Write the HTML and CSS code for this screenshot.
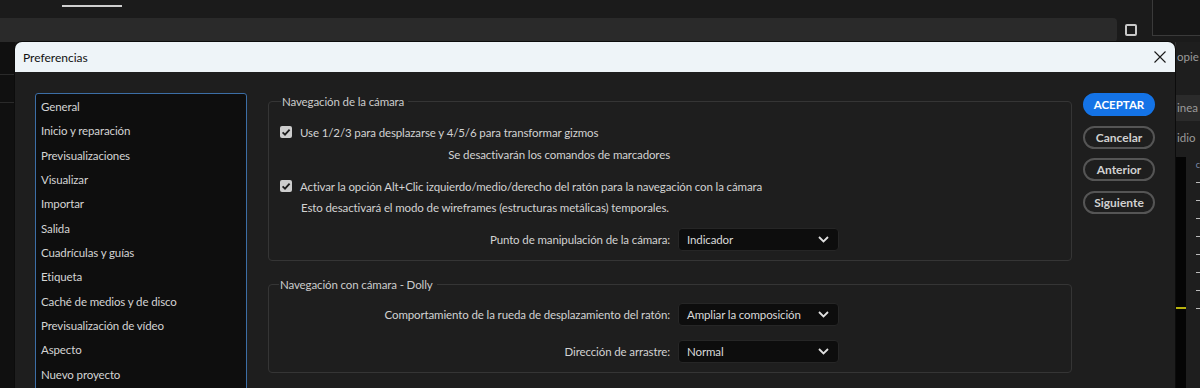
FILE: index.html
```html
<!DOCTYPE html>
<html lang="es">
<head>
<meta charset="utf-8">
<title>Preferencias</title>
<link rel="stylesheet" href="styles.css">
</head>
<body>
<div class="app">
  <div class="top"><div class="tab"></div></div>
  <div class="corner"></div>
  <div class="bar">
    <div class="field"></div>
    <div class="sq"></div>
  </div>
  <div class="work">
    <div class="lstrip"><div class="lrow"></div><div class="lrow"></div></div>
    <div class="center"></div>
    <div class="rstrip">
      <div class="rtxt r1">opie</div>
      <div class="rtxt r2">inea</div>
      <div class="rtxt r3">idio</div>
      <div class="meterrow">
        <div class="meter"><div class="peak"></div></div>
        <div class="ticks">
          <span class="cg">c</span>
          <i></i><i></i><i></i><i></i><i></i><i></i><i></i><i></i>
        </div>
      </div>
    </div>
  </div>

  <div class="dialog">
    <div class="titlebar">
      <span class="title">Preferencias</span>
      <svg class="close" width="12" height="12" viewBox="0 0 12 12"><path d="M0.5 0.5 L11.5 11.5 M11.5 0.5 L0.5 11.5" stroke="#1a1a1a" stroke-width="1.1" fill="none"/></svg>
    </div>
    <div class="body">
      <ul class="navlist">
        <li>General</li>
        <li>Inicio y reparación</li>
        <li>Previsualizaciones</li>
        <li>Visualizar</li>
        <li>Importar</li>
        <li>Salida</li>
        <li>Cuadrículas y guías</li>
        <li>Etiqueta</li>
        <li>Caché de medios y de disco</li>
        <li>Previsualización de vídeo</li>
        <li>Aspecto</li>
        <li>Nuevo proyecto</li>
      </ul>

      <div class="main">
        <fieldset class="group g1">
          <legend>Navegación de la cámara</legend>
          <div class="check r-a">
            <span class="box"><svg width="12" height="12" viewBox="0 0 12 12"><path d="M2.6 6.3 L5 8.6 L9.6 3.6" stroke="#1c1c1c" stroke-width="1.8" fill="none"/></svg></span>
            <span>Use 1/2/3 para desplazarse y 4/5/6 para transformar gizmos</span>
          </div>
          <div class="note n1">Se desactivarán los comandos de marcadores</div>
          <div class="check r-b">
            <span class="box"><svg width="12" height="12" viewBox="0 0 12 12"><path d="M2.6 6.3 L5 8.6 L9.6 3.6" stroke="#1c1c1c" stroke-width="1.8" fill="none"/></svg></span>
            <span>Activar la opción Alt+Clic izquierdo/medio/derecho del ratón para la navegación con la cámara</span>
          </div>
          <div class="note n2">Esto desactivará el modo de wireframes (estructuras metálicas) temporales.</div>
          <div class="frow fr1">
            <span class="flabel">Punto de manipulación de la cámara:</span>
            <div class="select"><span>Indicador</span><svg width="11" height="7" viewBox="0 0 11 7"><path d="M1 1 L5.5 5.5 L10 1" stroke="#e0e0e0" stroke-width="1.8" fill="none"/></svg></div>
          </div>
        </fieldset>

        <fieldset class="group g2">
          <legend>Navegación con cámara - Dolly</legend>
          <div class="frow fr2">
            <span class="flabel">Comportamiento de la rueda de desplazamiento del ratón:</span>
            <div class="select"><span>Ampliar la composición</span><svg width="11" height="7" viewBox="0 0 11 7"><path d="M1 1 L5.5 5.5 L10 1" stroke="#e0e0e0" stroke-width="1.8" fill="none"/></svg></div>
          </div>
          <div class="frow fr3">
            <span class="flabel">Dirección de arrastre:</span>
            <div class="select"><span>Normal</span><svg width="11" height="7" viewBox="0 0 11 7"><path d="M1 1 L5.5 5.5 L10 1" stroke="#e0e0e0" stroke-width="1.8" fill="none"/></svg></div>
          </div>
        </fieldset>
      </div>

      <div class="buttons">
        <button class="btn primary">ACEPTAR</button>
        <button class="btn">Cancelar</button>
        <button class="btn">Anterior</button>
        <button class="btn">Siguiente</button>
      </div>
    </div>
  </div>
</div>
</body>
</html>
```
FILE: styles.css
```css
* { box-sizing: border-box; }
html, body { margin: 0; padding: 0; }
body {
  width: 1200px;
  height: 388px;
  overflow: hidden;
  background: #1c1c1c;
  font-family: "Lato", "Liberation Sans", sans-serif;
}

.app {
  position: relative;
  width: 1200px;
  height: 388px;
  display: grid;
  grid-template-columns: 1fr 48px;
  grid-template-rows: 18px 24px 346px;
  background: #1b1b1b;
}

.top { grid-column: 1; grid-row: 1; }
.tab {
  margin-left: 62px;
  width: 60px;
  height: 7px;
  border-bottom: 2px solid #cfcfcf;
}
.corner {
  grid-column: 2;
  grid-row: 1 / 3;
  margin-bottom: 6px;
  background: #161616;
  border: 1px solid #3a3a3a;
  border-top: none;
  border-right: none;
}
.bar {
  grid-column: 1;
  grid-row: 2;
  display: flex;
  align-items: center;
}
.field {
  width: 1117px;
  height: 24px;
  background: #2a2a2a;
  border-radius: 0 4px 4px 0;
}
.sq {
  margin-left: 8px;
  width: 12px;
  height: 12px;
  border: 2px solid #c8c8c8;
  border-radius: 2px;
}

.work {
  grid-column: 1 / 3;
  grid-row: 3;
  display: flex;
}
.lstrip {
  width: 15px;
  background: #101010;
  padding-top: 32px;
}
.lrow { height: 28px; border-top: 1px solid #2a2a2a; }
.center { flex: 1; }
.rstrip {
  width: 25px;
  background: #1e1e1e;
  display: flex;
  flex-direction: column;
  overflow: hidden;
  border-left: 1px solid #333;
}
.rtxt {
  font-size: 11.5px;
  color: #9a9a9a;
  white-space: nowrap;
  line-height: 16px;
  padding-left: 1px;
}
.r1 { margin-top: 7px; }
.r2 { margin-top: 30px; background: #2b2b2b; height: 26px; line-height: 26px; }
.r3 { margin-top: 9px; }
.meterrow { display: flex; flex: 1; margin-top: 11px; }
.meter {
  width: 10px;
  background: #050505;
  position: relative;
}
.peak {
  position: absolute;
  left: 0; right: 0;
  top: 150px;
  height: 2px;
  background: #b7b20e;
}
.ticks {
  flex: 1;
  display: flex;
  flex-direction: column;
  align-items: flex-end;
  padding-top: 2px;
}
.cg { font-size: 9px; color: #7f8fb0; line-height: 12px; }
.ticks i { display: block; width: 4px; height: 1px; background: #bbb; margin-top: 17px; }
.ticks i:first-of-type { margin-top: 11px; }

/* dialog */
.dialog {
  position: absolute;
  left: 15px;
  top: 42px;
  width: 1160px;
  height: 360px;
  background: #1e1e1e;
  border-radius: 7px 7px 0 0;
  box-shadow: 0 0 0 1px #0c0c0c;
  overflow: hidden;
}
.titlebar {
  height: 30px;
  background: #eef4f8;
  display: flex;
  align-items: center;
  padding: 0 9px 0 8px;
}
.title {
  flex: 1;
  font-size: 12px;
  color: #111;
}

.body {
  display: flex;
  align-items: flex-start;
  padding: 21px 20px 0 20px;
  font-size: 11.5px;
  letter-spacing: -0.12px;
}
.navlist {
  flex: none;
  width: 212px;
  margin: 0;
  padding: 1px 0 0 0;
  list-style: none;
  height: 320px;
  background: #0e0e0e;
  border: 1px solid #3c6ea6;
  border-radius: 3px;
}
.navlist li {
  height: 24.33px;
  line-height: 24.33px;
  padding-left: 5px;
  color: #d4d4d4;
  white-space: nowrap;
}

.main {
  flex: none;
  margin-left: 21px;
  width: 804px;
}
.group {
  margin: 0;
  padding: 0 11px 9px 11px;
  border: 1px solid #353535;
  border-radius: 4px;
  min-width: 0;
  width: 804px;
}
.group legend {
  padding: 0 4px 0 1px;
  margin-left: 1px;
  line-height: 17px;
  color: #cccccc;
}
.g2 { margin-top: 15px; }
.g2 legend { margin-left: -1px; }

.check {
  display: flex;
  align-items: center;
  gap: 8px;
  height: 20px;
  color: #d2d2d2;
  white-space: nowrap;
}
.r-a { margin-top: 12px; }
.r-b { margin-top: 12px; }
.box {
  flex: none;
  width: 12px;
  height: 12px;
  background: #cdcdcd;
  border-radius: 2px;
  display: flex;
}
.note {
  height: 18px;
  line-height: 18px;
  color: #d2d2d2;
  white-space: nowrap;
}
.n1 { margin-top: 4px; width: 390px; text-align: right; }
.n2 { margin-top: 3px; padding-left: 21px; }

.frow {
  display: flex;
  align-items: center;
  gap: 8px;
  height: 23px;
}
.fr1 { margin-top: 11px; }
.fr2 { margin-top: 10px; }
.fr3 { margin-top: 14px; }
.flabel {
  width: 390px;
  text-align: right;
  color: #d2d2d2;
  white-space: nowrap;
}
.select {
  width: 161px;
  height: 23px;
  background: #0d0d0d;
  border: 1px solid #262626;
  border-radius: 4px;
  display: flex;
  align-items: center;
  justify-content: space-between;
  padding: 0 9px 0 8px;
  color: #dadada;
}

.buttons {
  flex: none;
  margin-left: 11px;
  width: 72px;
  display: flex;
  flex-direction: column;
  gap: 9.5px;
}
.btn {
  width: 72px;
  height: 23px;
  border-radius: 12px;
  border: 2px solid #555555;
  background: transparent;
  color: #d0d0d0;
  font-family: "Lato", "Liberation Sans", sans-serif;
  font-weight: 700;
  font-size: 12px;
  padding: 0;
}
.btn.primary {
  background: #1473e6;
  border-color: #1473e6;
  color: #ffffff;
  font-size: 11.5px;
}
```
